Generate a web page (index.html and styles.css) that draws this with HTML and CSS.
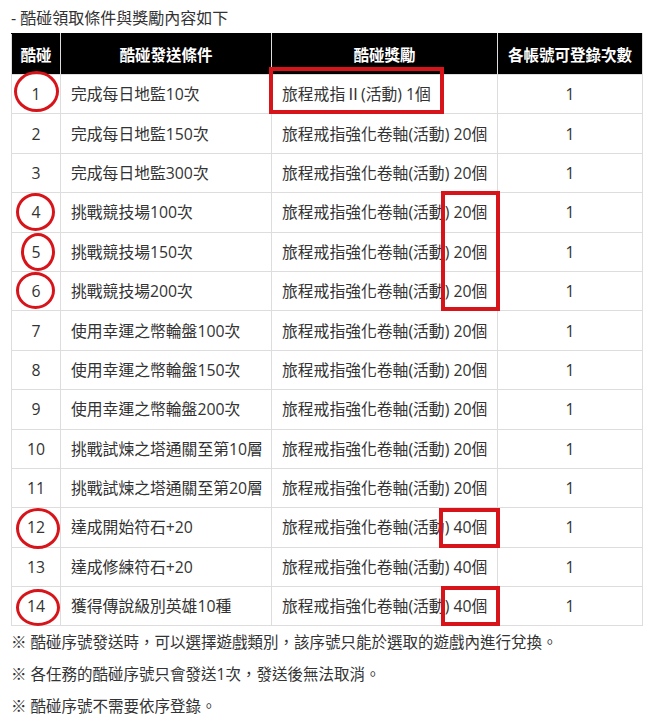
FILE: index.html
```html
<!DOCTYPE html>
<html lang="zh-Hant">
<head>
<meta charset="utf-8">
<link rel="stylesheet" href="styles.css">
</head>
<body>
<div class="page">
  <p class="title">- 酷碰領取條件與獎勵內容如下</p>
  <table class="tbl">
    <colgroup>
      <col class="c1"><col class="c2"><col class="c3"><col class="c4">
    </colgroup>
    <thead>
      <tr><th>酷碰</th><th>酷碰發送條件</th><th>酷碰獎勵</th><th>各帳號可登錄次數</th></tr>
    </thead>
    <tbody>
      <tr><td class="num">1</td><td>完成每日地監10次</td><td>旅程戒指<span class="cjk">Ⅱ</span>(活動) 1個</td><td class="num">1</td></tr>
      <tr><td class="num">2</td><td>完成每日地監150次</td><td>旅程戒指強化卷軸(活動) 20個</td><td class="num">1</td></tr>
      <tr><td class="num">3</td><td>完成每日地監300次</td><td>旅程戒指強化卷軸(活動) 20個</td><td class="num">1</td></tr>
      <tr><td class="num">4</td><td>挑戰競技場100次</td><td>旅程戒指強化卷軸(活動) 20個</td><td class="num">1</td></tr>
      <tr><td class="num">5</td><td>挑戰競技場150次</td><td>旅程戒指強化卷軸(活動) 20個</td><td class="num">1</td></tr>
      <tr><td class="num">6</td><td>挑戰競技場200次</td><td>旅程戒指強化卷軸(活動) 20個</td><td class="num">1</td></tr>
      <tr><td class="num">7</td><td>使用幸運之幣輪盤100次</td><td>旅程戒指強化卷軸(活動) 20個</td><td class="num">1</td></tr>
      <tr><td class="num">8</td><td>使用幸運之幣輪盤150次</td><td>旅程戒指強化卷軸(活動) 20個</td><td class="num">1</td></tr>
      <tr><td class="num">9</td><td>使用幸運之幣輪盤200次</td><td>旅程戒指強化卷軸(活動) 20個</td><td class="num">1</td></tr>
      <tr><td class="num">10</td><td>挑戰試煉之塔通關至第10層</td><td>旅程戒指強化卷軸(活動) 20個</td><td class="num">1</td></tr>
      <tr><td class="num">11</td><td>挑戰試煉之塔通關至第20層</td><td>旅程戒指強化卷軸(活動) 20個</td><td class="num">1</td></tr>
      <tr><td class="num">12</td><td>達成開始符石+20</td><td>旅程戒指強化卷軸(活動) 40個</td><td class="num">1</td></tr>
      <tr><td class="num">13</td><td>達成修練符石+20</td><td>旅程戒指強化卷軸(活動) 40個</td><td class="num">1</td></tr>
      <tr><td class="num">14</td><td>獲得傳說級別英雄10種</td><td>旅程戒指強化卷軸(活動) 40個</td><td class="num">1</td></tr>
    </tbody>
  </table>
  <p class="note">※ 酷碰序號發送時，可以選擇遊戲類別，該序號只能於選取的遊戲內進行兌換。</p>
  <p class="note">※ 各任務的酷碰序號只會發送1次，發送後無法取消。</p>
  <p class="note">※ 酷碰序號不需要依序登錄。</p>

  <span class="ring r1"></span>
  <span class="ring r4"></span>
  <span class="ring r5"></span>
  <span class="ring r6"></span>
  <span class="ring r12"></span>
  <span class="ring r14"></span>
  <span class="box b1"></span>
  <span class="box b4"></span>
  <span class="box b12"></span>
  <span class="box b14"></span>
</div>
</body>
</html>
```
FILE: styles.css
```css
html, body {
  margin: 0;
  padding: 0;
  background: #fff;
}
.page {
  position: relative;
  width: 654px;
  height: 727px;
  padding: 0 0 0 11px;
  box-sizing: border-box;
  font-family: "Open Sans", "Noto Sans CJK TC", sans-serif;
  font-size: 15.8px;
  color: #333;
}
.cjk {
  font-family: "Noto Sans CJK TC", sans-serif;
}
.title {
  margin: 0;
  padding-top: 7px;
  height: 33px;
  line-height: 22px;
  box-sizing: border-box;
  font-size: 16px;
}
.tbl {
  border-collapse: collapse;
  table-layout: fixed;
  width: 631px;
}
.c1 { width: 49px; }
.c2 { width: 211px; }
.c3 { width: 226px; }
.c4 { width: 145px; }
.tbl th {
  background: #000;
  color: #fff;
  font-weight: bold;
  height: 40px;
  padding: 0;
  text-align: center;
  border: 1px solid #ddd;
  border-top-color: #000;
  font-size: 15.5px;
}
.tbl td {
  height: 39.4px;
  padding: 0 0 0 10px;
  border: 1px solid #ddd;
  box-sizing: border-box;
  white-space: nowrap;
  line-height: 20px;
}
.tbl td.num {
  text-align: center;
  padding: 0;
}
.note {
  margin: 0;
  height: 32px;
  line-height: 32px;
  font-size: 15.5px;
}
.ring {
  position: absolute;
  border: 3px solid #d8141b;
  border-radius: 50%;
  box-sizing: border-box;
}
.r1 { left: 14px; top: 71px; width: 45px; height: 41px; }
.r4 { left: 16px; top: 193px; width: 39px; height: 38px; }
.r5 { left: 21px; top: 233px; width: 34px; height: 38px; }
.r6 { left: 16px; top: 272px; width: 39px; height: 37px; }
.r12 { left: 16px; top: 508px; width: 44px; height: 41px; }
.r14 { left: 16px; top: 589px; width: 44px; height: 37px; }
.box {
  position: absolute;
  border: 4px solid #d8141b;
  box-sizing: border-box;
}
.b1 { left: 269px; top: 67px; width: 175px; height: 47px; }
.b4 { left: 441px; top: 191px; width: 59px; height: 120px; }
.b12 { left: 439px; top: 508px; width: 61px; height: 40px; }
.b14 { left: 441px; top: 586px; width: 59px; height: 40px; }
```
